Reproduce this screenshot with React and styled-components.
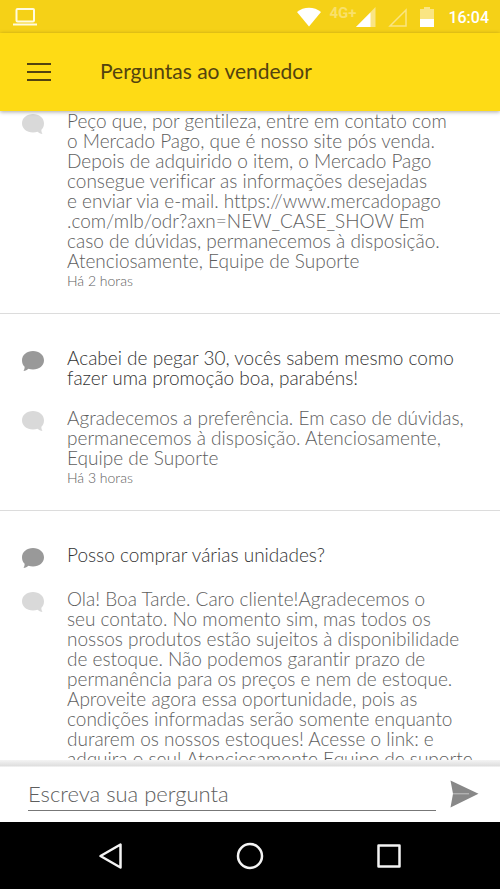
import React from "react"
import styled, { createGlobalStyle } from "styled-components"

const colors = {
  brand: "#fedb15",
  brandDark: "#f5d117",
  brandLight: "#fae583",
  title: "#53430f",
  question: "#333",
  answer: "#5e5e5e",
  line: "#dcdcdc",
}

const GlobalStyle = createGlobalStyle`
  * {
    box-sizing: border-box;
  }

  body {
    margin: 0;
    background: #fff;
    font-family: Lato, "Open Sans", sans-serif;
    font-variant-ligatures: none;
  }
`

const Screen = styled.div`
  display: flex;
  flex-direction: column;
  height: 100vh;
  overflow: hidden;
`

const StatusBar = styled.div`
  display: flex;
  flex: none;
  align-items: center;
  justify-content: space-between;
  height: 33px;
  padding: 0 11px 0 13px;
  background: ${colors.brandDark};
  color: #fff;
`

const StatusIcons = styled.div`
  display: flex;
  align-items: center;
`

const Network = styled.span`
  padding: 0 0 8px 8px;
  color: #f9e06a;
  font: 700 15px/18px Roboto, sans-serif;
`

const SignalIcon = styled.svg`
  margin-right: 12px;
`

const Clock = styled.time`
  margin-left: 14px;
  padding-top: 2px;
  font: 500 16px/20px Roboto, sans-serif;
`

const Header = styled.header`
  position: relative;
  z-index: 1;
  display: flex;
  flex: none;
  align-items: center;
  gap: 48px;
  height: 78px;
  padding: 0 26px;
  background: ${colors.brand};
  box-shadow: 0 1px 4px rgba(0, 0, 0, 0.35);
  color: ${colors.title};
`

const IconButton = styled.button`
  display: flex;
  align-items: center;
  justify-content: center;
  padding: 0;
  border: 0;
  background: none;
  color: inherit;
`

const Title = styled.h1`
  margin: 0;
  padding-bottom: 2px;
  font-size: 21px;
  font-weight: 400;
  line-height: 24px;
`

const Feed = styled.main`
  flex: 1;
  min-height: 0;
  overflow: hidden;
`

const Thread = styled.article`
  display: flex;
  flex-direction: column;
  gap: 20px;
  padding: ${props => (props.$continued ? 0 : 34)}px 20px 24px 22px;
  border-bottom: 1px solid ${colors.line};
`

const Message = styled.div`
  display: grid;
  grid-template-columns: 22px 1fr;
  column-gap: 23px;
  align-items: start;
  color: ${props => (props.$answer ? colors.answer : colors.question)};
`

const Text = styled.p`
  margin: 0;
  font-size: 19px;
  font-weight: 300;
  line-height: 20px;
  white-space: pre;
`

const Age = styled.time`
  display: block;
  padding-top: 2px;
  font-size: 14px;
  font-weight: 300;
  line-height: 16px;
`

const BubbleIcon = styled.svg`
  margin-top: 3px;
  fill: ${props => (props.$answer ? "#d9d9d9" : "#999")};
  transform: ${props => (props.$answer ? "scaleX(-1)" : "none")};
`

const Composer = styled.form`
  display: flex;
  flex: none;
  align-items: center;
  gap: 14px;
  height: 62px;
  padding: 6px 21px 0 28px;
  background: linear-gradient(#f4f4f4, #dedede 6px, #fff 7px);
  color: #888;
`

const QuestionInput = styled.input`
  flex: 1;
  min-width: 0;
  height: 34px;
  padding: 0;
  border: 0;
  border-bottom: 1px solid #777;
  border-radius: 0;
  outline: 0;
  background: none;
  color: ${colors.question};
  font: 300 22px/24px Lato, "Open Sans", sans-serif;
  font-variant-ligatures: none;

  &::placeholder {
    color: ${colors.answer};
    opacity: 1;
  }
`

const NavBar = styled.nav`
  display: flex;
  flex: none;
  align-items: center;
  justify-content: center;
  gap: 112px;
  height: 67px;
  background: #000;
  color: #f4f4f4;
`

const threads = [
  {
    answer: `Peço que, por gentileza, entre em contato com
o Mercado Pago, que é nosso site pós venda.
Depois de adquirido o item, o Mercado Pago
consegue verificar as informações desejadas
e enviar via e-mail. https://www.mercadopago
.com/mlb/odr?axn=NEW_CASE_SHOW Em
caso de dúvidas, permanecemos à disposição.
Atenciosamente, Equipe de Suporte`,
    age: "Há 2 horas",
  },
  {
    question: `Acabei de pegar 30, vocês sabem mesmo como
fazer uma promoção boa, parabéns!`,
    answer: `Agradecemos a preferência. Em caso de dúvidas,
permanecemos à disposição. Atenciosamente,
Equipe de Suporte`,
    age: "Há 3 horas",
  },
  {
    question: "Posso comprar várias unidades?",
    answer: `Ola! Boa Tarde. Caro cliente!Agradecemos o
seu contato. No momento sim, mas todos os
nossos produtos estão sujeitos à disponibilidade
de estoque. Não podemos garantir prazo de
permanência para os preços e nem de estoque.
Aproveite agora essa oportunidade, pois as
condições informadas serão somente enquanto
durarem os nossos estoques! Acesse o link: e
adquira o seu! Atenciosamente Equipe de suporte`,
  },
]

function Bubble({ answer }) {
  return (
    <BubbleIcon $answer={answer} width="22" height="21" viewBox="0 0 22 21">
      <path d="M11 0C17.2 0 22 4 22 9.300S17.200 18.600 11 18.600c-1.600 0-3.200-.3-4.500-.8-1.300 1.100-3 1.900-5 2.300.8-1.200 1.200-2.700 1.100-4.300C.9 14.200 0 11.900 0 9.300 0 4 4.800 0 11 0z" />
    </BubbleIcon>
  )
}

export default function App() {
  return (
    <Screen>
      <GlobalStyle />
      <StatusBar>
        <svg width="24" height="18" viewBox="0 0 24 18" fill="none" stroke="#fffbe0" strokeWidth="2">
          <rect x="3.500" y="1" width="17.500" height="12.500" rx="1" />
          <path d="M0 16.500h24" />
        </svg>
        <StatusIcons>
          <svg width="24" height="20" viewBox="0 0 24 20">
            <path d="M0 5C6.500-.8 17.500-.8 24 5L12 19.500z" fill="#fff" />
          </svg>
          <Network>4G+</Network>
          <SignalIcon width="20" height="20" viewBox="0 0 20 20">
            <path d="M19.500 0v20H0z" fill={colors.brandLight} />
            <path d="M14.500 5.500V20H0z" fill="#fff" />
          </SignalIcon>
          <SignalIcon width="20" height="20" viewBox="0 0 20 20">
            <path d="M18 3v16H2z" fill="none" stroke={colors.brandLight} strokeWidth="1.500" />
          </SignalIcon>
          <svg width="14" height="20" viewBox="0 0 14 20">
            <path d="M4 0h6v2h4v11H0V2h4z" fill={colors.brandLight} />
            <path d="M0 12h14v8H0z" fill="#fff" />
          </svg>
          <Clock>16:04</Clock>
        </StatusIcons>
      </StatusBar>
      <Header>
        <IconButton type="button" aria-label="Menu">
          <svg width="26" height="20" viewBox="0 0 26 20" stroke="currentColor" strokeWidth="2">
            <path d="M1 2h24M1 10h24M1 18h24" />
          </svg>
        </IconButton>
        <Title>Perguntas ao vendedor</Title>
      </Header>
      <Feed>
        {threads.map((thread, i) => (
          <Thread key={i} $continued={!thread.question}>
            {thread.question && (
              <Message>
                <Bubble />
                <Text>{thread.question}</Text>
              </Message>
            )}
            <Message $answer>
              <Bubble answer />
              <div>
                <Text>{thread.answer}</Text>
                {thread.age && <Age>{thread.age}</Age>}
              </div>
            </Message>
          </Thread>
        ))}
      </Feed>
      <Composer onSubmit={e => e.preventDefault()}>
        <QuestionInput aria-label="Escreva sua pergunta" placeholder="Escreva sua pergunta" />
        <IconButton type="submit" aria-label="Enviar">
          <svg width="29" height="28" viewBox="0 0 29 28">
            <path d="M.5.500 28.500 13.800.500 27.500l2.500-13.700z" fill="currentColor" />
            <path d="M3 13.800h16" stroke="#c4c4c4" />
          </svg>
        </IconButton>
      </Composer>
      <NavBar>
        <IconButton type="button" aria-label="Voltar">
          <svg width="26" height="28" viewBox="0 0 26 28" fill="none" stroke="currentColor" strokeWidth="2.500" strokeLinejoin="round">
            <path d="M22.500 2.500v23L2.500 14z" />
          </svg>
        </IconButton>
        <IconButton type="button" aria-label="Início">
          <svg width="28" height="28" viewBox="0 0 28 28" fill="none" stroke="currentColor" strokeWidth="2.500">
            <circle cx="14" cy="14" r="12" />
          </svg>
        </IconButton>
        <IconButton type="button" aria-label="Recentes">
          <svg width="26" height="26" viewBox="0 0 26 26" fill="none" stroke="currentColor" strokeWidth="2.500" strokeLinejoin="round">
            <path d="M2.500 2.500h21v21h-21z" />
          </svg>
        </IconButton>
      </NavBar>
    </Screen>
  )
}
